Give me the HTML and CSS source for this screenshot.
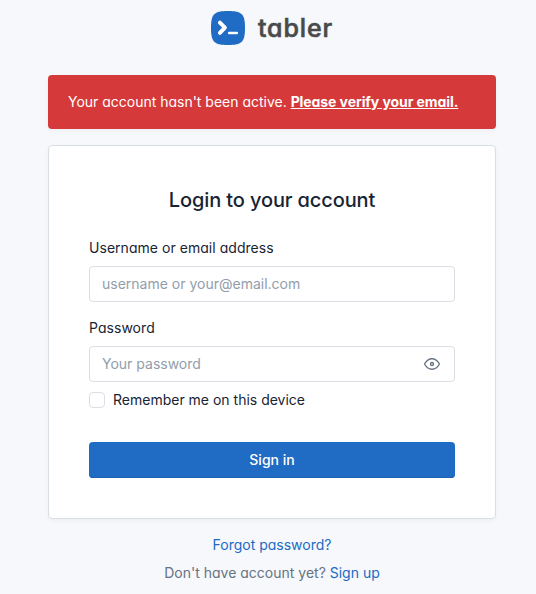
FILE: index.html
```html
<!DOCTYPE html>
<html lang="en">
<head>
<meta charset="utf-8">
<title>Sign in</title>
<link rel="stylesheet" href="styles.css">
</head>
<body>
<main class="page">
  <a class="brand">
    <svg class="brand-icon" width="34" height="34" viewBox="0 0 34 34">
      <path class="brand-tile" d="M0 17C0 3 3 0 17 0s17 3 17 17-3 17-17 17S0 31 0 17Z"/>
      <path class="brand-chevron" d="m8.9 11.6 5 5-5 5.2"/>
      <path class="brand-dash" d="M18.2 22h7.6"/>
    </svg>
    <span class="brand-name">tabler</span>
  </a>
  <div class="alert">Your account hasn't been active. <a class="alert-link">Please verify your email.</a></div>
  <form class="card">
    <h2 class="title">Login to your account</h2>
    <label class="label" for="user">Username or email address</label>
    <input class="input user" id="user" type="text" placeholder="username or your@email.com">
    <label class="label" for="pass">Password</label>
    <div class="input password">
      <input class="bare" id="pass" type="password" placeholder="Your password">
      <svg class="eye" width="18" height="18" viewBox="0 0 24 24">
        <circle cx="12" cy="12" r="2"/>
        <path d="M22 12c-2.667 4.667-6 7-10 7s-7.333-2.333-10-7c2.667-4.667 6-7 10-7s7.333 2.333 10 7"/>
      </svg>
    </div>
    <label class="check"><input class="box" type="checkbox"><span>Remember me on this device</span></label>
    <button class="button" type="button">Sign in</button>
  </form>
  <div class="links">
    <a class="link">Forgot password?</a>
    <div>Don't have account yet? <a class="link">Sign up</a></div>
  </div>
</main>
</body>
</html>
```
FILE: styles.css
```css
* { box-sizing: border-box; }
body {
  margin: 0;
  height: 594px;
  overflow: hidden;
  background: #f6f8fb;
  color: #182433;
  font: 400 14px/20px Inter, sans-serif;
  font-feature-settings: "cv03", "cv04", "cv11";
}
.page { width: 448px; margin-left: 48px; padding-top: 11px; }
.brand { display: flex; justify-content: center; align-items: center; height: 34px; gap: 13px; }
.brand-tile { fill: #206bc4; }
.brand-chevron, .brand-dash { fill: none; stroke: #fff; stroke-linecap: round; stroke-linejoin: round; }
.brand-chevron { stroke-width: 4; }
.brand-dash { stroke-width: 2.6; }
.brand-name {
  color: #4a4a4a;
  font-size: 25px;
  line-height: 34px;
  font-weight: 500;
  letter-spacing: .9px;
  -webkit-text-stroke: .6px #4a4a4a;
}
.alert {
  margin-top: 30px;
  height: 54px;
  padding: 17px 19px 17px 20px;
  border-radius: 4px;
  background: #d63939;
  color: #fff;
  letter-spacing: -.01px;
  box-shadow: 0 2px 4px rgba(24, 36, 51, .04);
}
.alert-link { font-weight: 700; letter-spacing: -.08px; text-decoration: underline; }
.card {
  display: flex;
  flex-direction: column;
  height: 374px;
  margin-top: 16px;
  padding: 40px;
  background: #fff;
  border: 1px solid #dadfe5;
  border-radius: 4px;
  box-shadow: 0 2px 4px rgba(24, 36, 51, .04);
}
.title { margin: 0 0 24px; text-align: center; font-size: 20px; line-height: 28px; font-weight: 500; letter-spacing: -.12px; }
.label { margin-bottom: 8px; font-weight: 400; letter-spacing: .04px; }
.input {
  width: 100%;
  height: 36px;
  padding: 0 12px;
  border: 1px solid #dadfe5;
  border-radius: 4px;
  background: #fff;
  font: 400 14px/20px Inter, sans-serif;
}
.user { margin-bottom: 16px; padding-bottom: 2px; }
.password { display: flex; align-items: center; padding-right: 13px; }
.bare { flex: 1; min-width: 0; padding: 0; border: 0; outline: 0; background: none; font: inherit; }
::placeholder { color: #929dab; opacity: 1; }
.eye { fill: none; stroke: #667382; stroke-width: 1.8; stroke-linecap: round; stroke-linejoin: round; }
.check { display: flex; align-items: center; gap: 8px; margin-top: 8px; }
.box { appearance: none; width: 16px; height: 16px; margin: 0; border: 1px solid #dadfe5; border-radius: 4px; }
.button {
  height: 36px;
  margin-top: 32px;
  padding: 0;
  border: 0;
  border-radius: 4px;
  background: #206bc4;
  box-shadow: inset 0 -1px 0 #1d60b0;
  color: #fff;
  font: 500 14px/20px Inter, sans-serif;
}
.links { display: flex; flex-direction: column; align-items: center; gap: 8px; margin-top: 16px; color: #667382; }
.link { color: #206bc4; }
```
